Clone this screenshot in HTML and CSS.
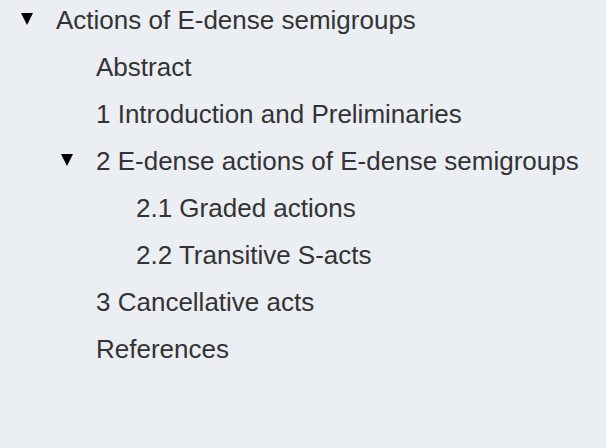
FILE: index.html
```html
<!DOCTYPE html>
<html lang="en">
<head>
<meta charset="utf-8">
<title>Contents</title>
<link rel="stylesheet" href="styles.css">
</head>
<body>
<nav class="toc">
  <ul class="level level-0">
    <li>
      <div class="row"><svg class="tri" viewBox="0 0 12 12" width="12" height="12"><path d="M0 0H12L6 12Z"/></svg><span>Actions of E-dense semigroups</span></div>
      <ul class="level level-1">
        <li><div class="row leaf"><span>Abstract</span></div></li>
        <li><div class="row leaf"><span>1 Introduction and Preliminaries</span></div></li>
        <li>
          <div class="row"><svg class="tri" viewBox="0 0 12 12" width="12" height="12"><path d="M0 0H12L6 12Z"/></svg><span>2 E-dense actions of E-dense semigroups</span></div>
          <ul class="level level-2">
            <li><div class="row leaf"><span>2.1 Graded actions</span></div></li>
            <li><div class="row leaf"><span>2.2 Transitive S-acts</span></div></li>
          </ul>
        </li>
        <li><div class="row leaf"><span>3 Cancellative acts</span></div></li>
        <li><div class="row leaf"><span>References</span></div></li>
      </ul>
    </li>
  </ul>
</nav>
</body>
</html>
```
FILE: styles.css
```css
html, body {
  margin: 0;
  padding: 0;
  background: #ebeef2;
  height: 100%;
}
.toc {
  font-family: "Liberation Sans", Arial, sans-serif;
  font-size: 26px;
  color: #333333;
  margin-top: -3px;
  padding-left: 21px;
}
.level {
  list-style: none;
  margin: 0;
  padding: 0;
}
.level-1, .level-2 {
  padding-left: 40px;
}
.row {
  display: flex;
  align-items: center;
  height: 47px;
  line-height: 47px;
  white-space: nowrap;
}
.tri {
  flex: none;
  width: 12px;
  height: 12px;
  margin-right: 23px;
  margin-top: -4px;
  fill: #000;
}
.leaf {
  padding-left: 35px;
}
```
